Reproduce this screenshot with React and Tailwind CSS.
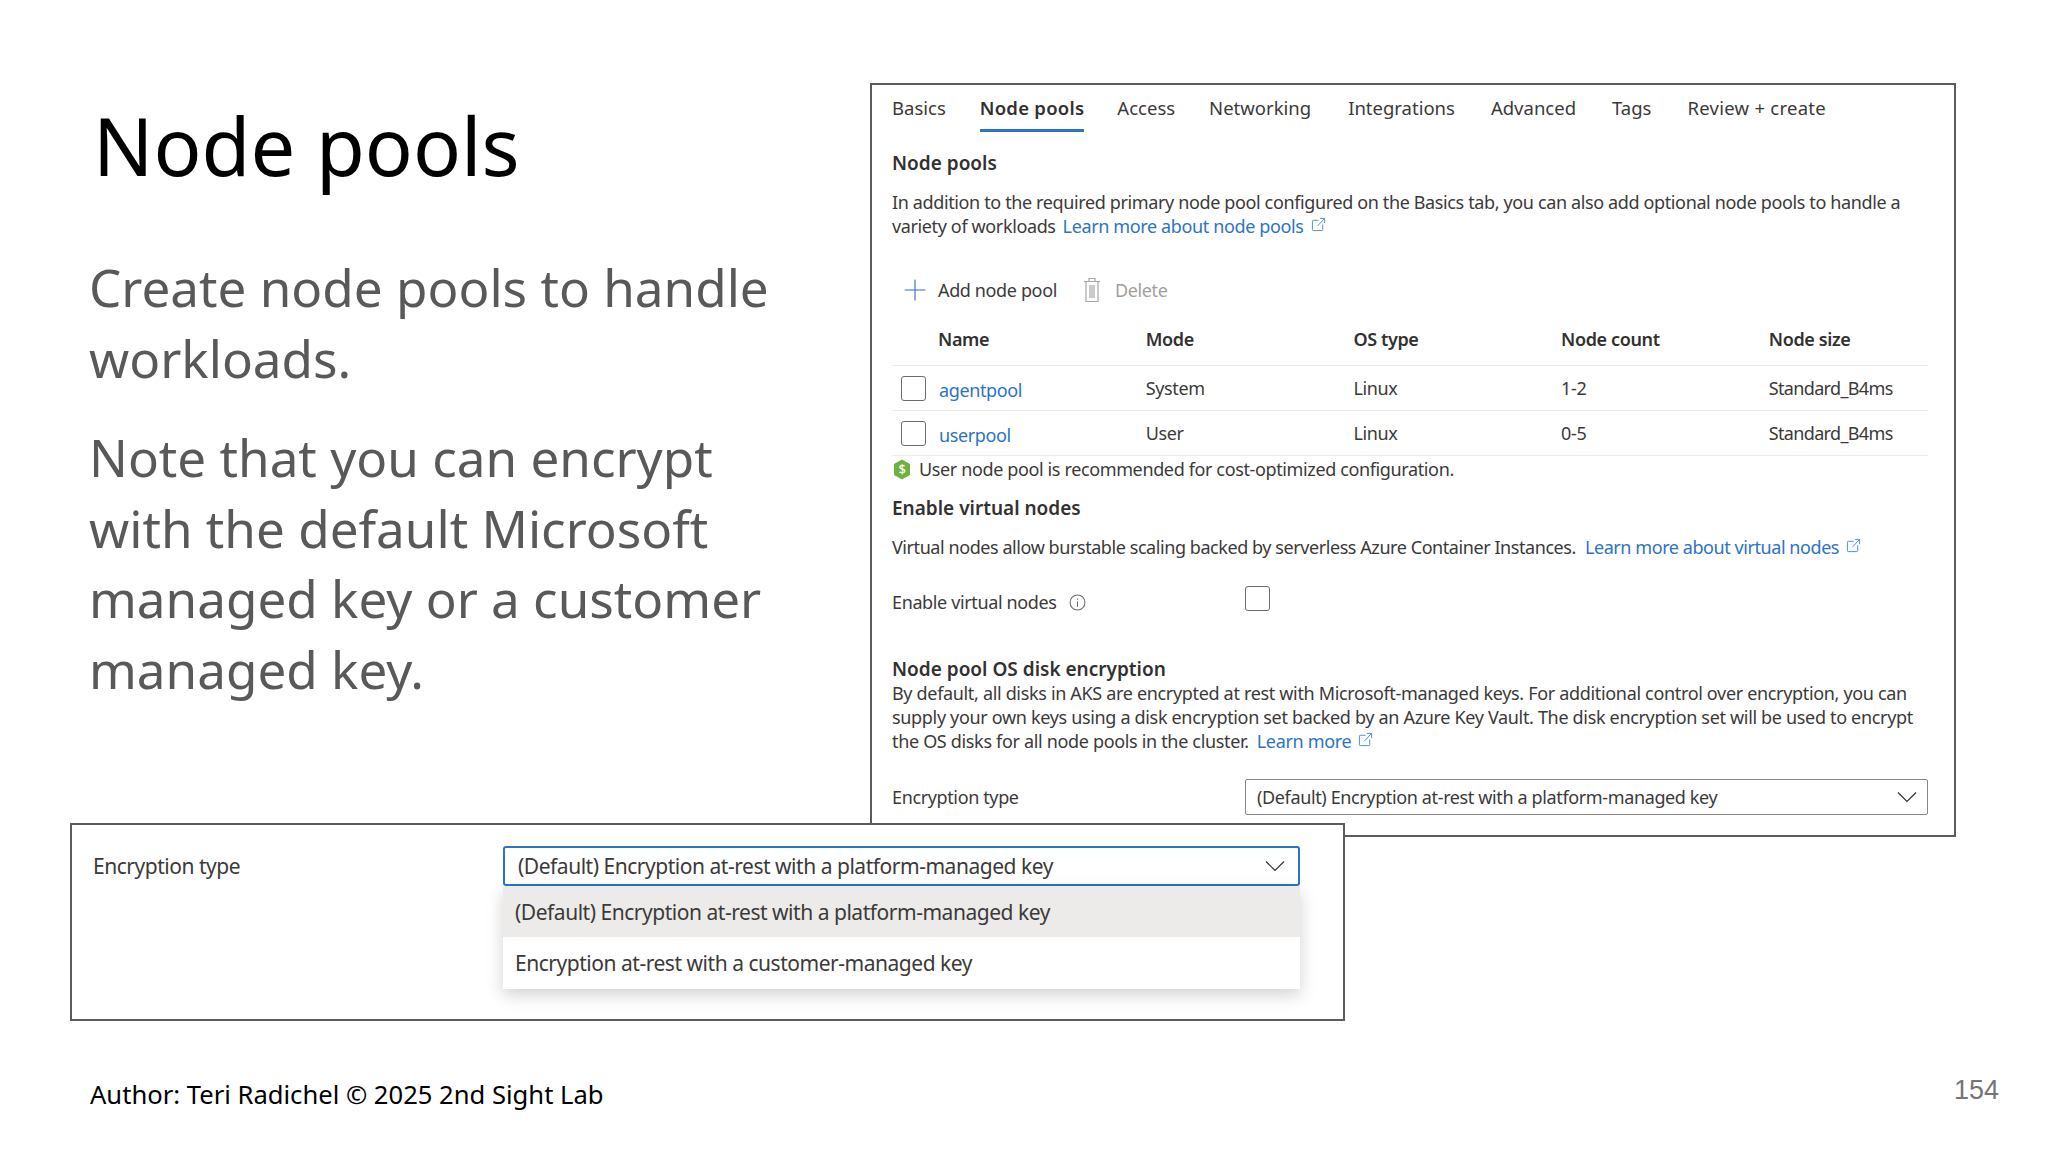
import { Plus } from "lucide-react";

const tabs = ["Basics", "Node pools", "Access", "Networking", "Integrations", "Advanced", "Tags", "Review + create"];
const tabGaps = ["mr-[34px]", "mr-[33px]", "mr-[34px]", "mr-[37px]", "mr-[36px]", "mr-[36px]", "mr-[36px]", "tracking-[0.26px]"];

const rows = [
  { name: "agentpool", mode: "System", count: "1-2" },
  { name: "userpool", mode: "User", count: "0-5" },
];

const ExternalIcon = () => (
  <svg viewBox="0 0 16 16" className="ml-[7px] inline-block h-[15px] w-[15px] align-[1px] text-[#4a8bd0]" fill="none" stroke="currentColor" strokeWidth="1">
    <path d="M8 3.5H2.5a1 1 0 0 0-1 1v9a1 1 0 0 0 1 1h9a1 1 0 0 0 1-1V8" />
    <path d="M7 9.5 14.5 1.5M9.5 1.5h5v5" />
  </svg>
);

const Chevron = () => (
  <svg viewBox="0 0 20 12" className="h-[12px] w-[20px] text-[#323130]" fill="none" stroke="currentColor" strokeWidth="1.2">
    <path d="M1 1.5 10 10.5 19 1.5" />
  </svg>
);

const Checkbox = () => <div className="h-[25px] w-[25px] rounded-[3px] border-[1.5px] border-[#6b6b6b] bg-white" />;

const Link = ({ children }) => <a className="text-[#2b74c4]">{children}</a>;

const ColHead = ({ children }) => <div className="font-semibold text-[#323130]">{children}</div>;

const Heading = ({ className, children }) => (
  <div className={`${className} text-[19px] font-semibold tracking-normal text-[#323130]`}>{children}</div>
);

const App = () => {
  return (
    <div className="relative flex h-[1152px] w-[2048px] flex-col overflow-hidden bg-white font-['Noto_Sans',sans-serif]">
      <div className="flex items-start">
        <div className="w-[870px] shrink-0 pl-[89px] pt-[95px]">
          <h1 className="ml-[4px] text-[79.5px] leading-[100px] text-black">Node pools</h1>
          <div className="mt-[57px] w-[740px] text-[51.2px] leading-[70.6px] text-[#595959]">
            <p>Create node pools to handle workloads.</p>
            <p className="mt-[29px]">Note that you can encrypt with the default Microsoft managed key or a customer managed key.</p>
          </div>
        </div>

        <div className="mt-[83px] h-[754px] w-[1086px] shrink-0 border-2 border-[#5c5c5c] pl-[20px] text-[18px] leading-[24px] tracking-[-0.37px] text-[#3b3a39]">
          <div className="flex h-[47px] items-start pt-[11px] text-[18.5px] tracking-normal">
            {tabs.map((tab, i) =>
              tab === "Node pools" ? (
                <div key={tab} className={`${tabGaps[i]} h-[36px] border-b-[3px] border-[#2b74c4] font-semibold tracking-[0.25px] text-[#323130]`}>
                  {tab}
                </div>
              ) : (
                <div key={tab} className={tabGaps[i]}>
                  {tab}
                </div>
              ),
            )}
          </div>

          <Heading className="mt-[19px]">Node pools</Heading>
          <div className="mt-[15px]">
            <p>In addition to the required primary node pool configured on the Basics tab, you can also add optional node pools to handle a</p>
            <p>
              variety of workloads
              <span className="ml-[7px]">
                <Link>Learn more about node pools</Link>
              </span>
              <ExternalIcon />
            </p>
          </div>

          <div className="mt-[36px] flex h-[32px] items-center">
            <Plus className="ml-[6px] h-[34px] w-[34px] text-[#2b74c4]" strokeWidth={0.8} />
            <span className="ml-[6px]">Add node pool</span>
            <svg viewBox="0 0 18 26" className="ml-[26px] h-[26px] w-[18px] text-[#a8a6a4]" fill="none" stroke="currentColor" strokeWidth="1.2">
              <path d="M1 4.5h16M6 4.5V1.5h6v3M3 4.5V24.5h12V4.5M7 8v13M9 8v13M11 8v13" />
            </svg>
            <span className="ml-[14px] text-[#a19f9d]">Delete</span>
          </div>

          <div className="mt-[7px] w-[1036px]">
            <div className="grid h-[53px] grid-cols-[46px_207.7px_207.7px_207.7px_207.7px_1fr] items-center border-b border-[#edebe9]">
              <div />
              <ColHead>Name</ColHead>
              <ColHead>Mode</ColHead>
              <ColHead>OS type</ColHead>
              <ColHead>Node count</ColHead>
              <ColHead>Node size</ColHead>
            </div>
            {rows.map((row) => (
              <div key={row.name} className="grid h-[45px] grid-cols-[46px_207.7px_207.7px_207.7px_207.7px_1fr] items-center border-b border-[#edebe9]">
                <div className="pl-[9px]">
                  <Checkbox />
                </div>
                <div className="pl-[1px] pt-[3px]">
                  <Link>{row.name}</Link>
                </div>
                <div>{row.mode}</div>
                <div>Linux</div>
                <div>{row.count}</div>
                <div className="tracking-[-0.65px]">Standard_B4ms</div>
              </div>
            ))}
          </div>

          <div className="flex h-[26px] items-center pl-[1px]">
            <svg viewBox="0 0 18 21" className="h-[21px] w-[18px]">
              <path d="M9 0.5 17 5v11l-8 4.5L1 16V5z" fill="#6db23f" />
              <text x="9" y="15" textAnchor="middle" fontSize="13" fontWeight="500" fill="#fff" fontFamily="Noto Sans, sans-serif">
                $
              </text>
            </svg>
            <span className="ml-[8px]">User node pool is recommended for cost-optimized configuration.</span>
          </div>

          <Heading className="mt-[14px]">Enable virtual nodes</Heading>
          <p className="mt-[15px] tracking-[-0.43px]">
            Virtual nodes allow burstable scaling backed by serverless Azure Container Instances.
            <span className="ml-[9px]">
              <Link>Learn more about virtual nodes</Link>
            </span>
            <ExternalIcon />
          </p>

          <div className="mt-[27px] flex h-[32px] items-start">
            <div className="flex h-[32px] w-[353px] items-center">
              <span>Enable virtual nodes</span>
              <svg viewBox="0 0 16 16" className="ml-[12px] h-[17px] w-[17px] text-[#6b6b6b]" fill="none" stroke="currentColor" strokeWidth="1">
                <circle cx="8" cy="8" r="7" />
                <path d="M8 7v5M8 4.2v1.2" />
              </svg>
            </div>
            <Checkbox />
          </div>

          <Heading className="mt-[39px]">Node pool OS disk encryption</Heading>
          <div className="tracking-[-0.33px]">
            <p>By default, all disks in AKS are encrypted at rest with Microsoft-managed keys. For additional control over encryption, you can</p>
            <p>supply your own keys using a disk encryption set backed by an Azure Key Vault. The disk encryption set will be used to encrypt</p>
            <p>
              the OS disks for all node pools in the cluster.
              <span className="ml-[8px]">
                <Link>Learn more</Link>
              </span>
              <ExternalIcon />
            </p>
          </div>

          <div className="mt-[26px] flex h-[36px] items-center">
            <span className="w-[353px]">Encryption type</span>
            <div className="flex h-[36px] w-[683px] items-center justify-between rounded-[2px] border border-[#8a8886] pl-[11px] pr-[10px]">
              <span>(Default) Encryption at-rest with a platform-managed key</span>
              <Chevron />
            </div>
          </div>
        </div>
      </div>

      <div className="absolute left-[70px] top-[823px] flex h-[198px] w-[1275px] items-start border-2 border-[#5c5c5c] bg-white pl-[21px] pt-[21px] text-[21px] leading-[28px] tracking-[-0.47px] text-[#3b3a39]">
        <div className="flex h-[40px] w-[410px] items-center">Encryption type</div>
        <div className="w-[797px]">
          <div className="flex h-[40px] items-center justify-between rounded-[3px] border-2 border-[#2b74c4] pl-[13px] pr-[13px]">
            <span>(Default) Encryption at-rest with a platform-managed key</span>
            <Chevron />
          </div>
          <div className="shadow-[0_6px_16px_rgba(0,0,0,0.18)]">
            <div className="flex h-[51px] items-center bg-[#edebe9] pl-[12px]">(Default) Encryption at-rest with a platform-managed key</div>
            <div className="flex h-[52px] items-center bg-white pl-[12px]">Encryption at-rest with a customer-managed key</div>
          </div>
        </div>
      </div>

      <div className="mt-auto flex items-start justify-between pb-[37px] pl-[90px] pr-[49px]">
        <div className="text-[25.6px] leading-[40px] text-black">Author: Teri Radichel © 2025 2nd Sight Lab</div>
        <div className="-mt-[5px] font-['Liberation_Sans',sans-serif] text-[27px] leading-[40px] text-[#757575]">154</div>
      </div>
    </div>
  );
};

export default App;
